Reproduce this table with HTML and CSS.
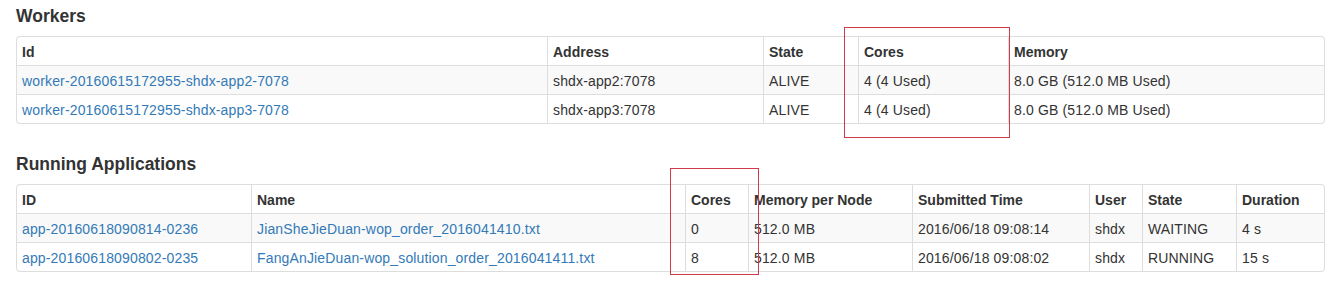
FILE: index.html
```html
<!DOCTYPE html>
<html>
<head>
<meta charset="utf-8">
<link rel="stylesheet" href="styles.css">
</head>
<body>
<div class="page">
  <h4 class="section-title">Workers</h4>
  <table class="grid">
    <colgroup>
      <col class="w-531"><col class="w-216"><col class="w-95"><col class="w-150"><col>
    </colgroup>
    <thead>
      <tr><th>Id</th><th>Address</th><th>State</th><th>Cores</th><th>Memory</th></tr>
    </thead>
    <tbody>
      <tr class="odd"><td><a href="#">worker-20160615172955-shdx-app2-7078</a></td><td>shdx-app2:7078</td><td>ALIVE</td><td>4 (4 Used)</td><td>8.0 GB (512.0 MB Used)</td></tr>
      <tr><td><a href="#">worker-20160615172955-shdx-app3-7078</a></td><td>shdx-app3:7078</td><td>ALIVE</td><td>4 (4 Used)</td><td>8.0 GB (512.0 MB Used)</td></tr>
    </tbody>
  </table>

  <h4 class="section-title second">Running Applications</h4>
  <table class="grid">
    <colgroup>
      <col class="w-235"><col class="w-434"><col class="w-63"><col class="w-164"><col class="w-177"><col class="w-53"><col class="w-94"><col>
    </colgroup>
    <thead>
      <tr><th>ID</th><th>Name</th><th>Cores</th><th>Memory per Node</th><th>Submitted Time</th><th>User</th><th>State</th><th>Duration</th></tr>
    </thead>
    <tbody>
      <tr class="odd"><td><a href="#">app-20160618090814-0236</a></td><td><a href="#">JianSheJieDuan-wop_order_2016041410.txt</a></td><td>0</td><td>512.0 MB</td><td>2016/06/18 09:08:14</td><td>shdx</td><td>WAITING</td><td>4 s</td></tr>
      <tr><td><a href="#">app-20160618090802-0235</a></td><td><a href="#">FangAnJieDuan-wop_solution_order_2016041411.txt</a></td><td>8</td><td>512.0 MB</td><td>2016/06/18 09:08:02</td><td>shdx</td><td>RUNNING</td><td>15 s</td></tr>
    </tbody>
  </table>
</div>
<div class="mark mark-workers"></div>
<div class="mark mark-apps"></div>
</body>
</html>
```
FILE: styles.css
```css
html, body {
  margin: 0;
  padding: 0;
  background: #ffffff;
}
body {
  font-family: "Liberation Sans", Arial, sans-serif;
  font-size: 14px;
  line-height: 20px;
  color: #333333;
  position: relative;
  min-height: 289px;
}
.page {
  padding: 6px 8px 0 16px;
}
.section-title {
  margin: 0 0 10px 0;
  font-size: 17.5px;
  line-height: 20px;
  font-weight: bold;
  color: #333333;
}
.section-title.second {
  margin-top: 30px;
  margin-bottom: 10px;
}
.grid {
  width: 1309px;
  table-layout: fixed;
  border-collapse: separate;
  border-spacing: 0;
  border: 1px solid #dddddd;
  border-left: 0;
  border-radius: 4px;
}
.grid th, .grid td {
  box-sizing: border-box;
  padding: 5px 5px 3px 5px;
  line-height: 20px;
  text-align: left;
  vertical-align: top;
  border-top: 1px solid #dddddd;
  border-left: 1px solid #dddddd;
  white-space: nowrap;
  overflow: hidden;
}
.grid td {
  letter-spacing: 0.15px;
}
.grid thead tr:first-child th {
  border-top: 0;
}
.grid th {
  font-weight: bold;
  color: #333333;
}
.grid tr.odd td {
  background: #f9f9f9;
}
.grid thead tr:first-child th:first-child { border-top-left-radius: 4px; }
.grid tbody tr:last-child td:first-child { border-bottom-left-radius: 4px; }
.grid a {
  color: #337ab7;
  text-decoration: none;
}
.w-531 { width: 531px; }
.w-216 { width: 216px; }
.w-95 { width: 95px; }
.w-150 { width: 150px; }
.w-235 { width: 235px; }
.w-434 { width: 434px; }
.w-63 { width: 63px; }
.w-164 { width: 164px; }
.w-177 { width: 177px; }
.w-53 { width: 53px; }
.w-94 { width: 94px; }

.mark {
  position: absolute;
  border: 1px solid #d23a4a;
  box-sizing: border-box;
  pointer-events: none;
}
.mark-workers {
  left: 844px;
  top: 27px;
  width: 166px;
  height: 111px;
}
.mark-apps {
  left: 670px;
  top: 168px;
  width: 89px;
  height: 107px;
}
```
